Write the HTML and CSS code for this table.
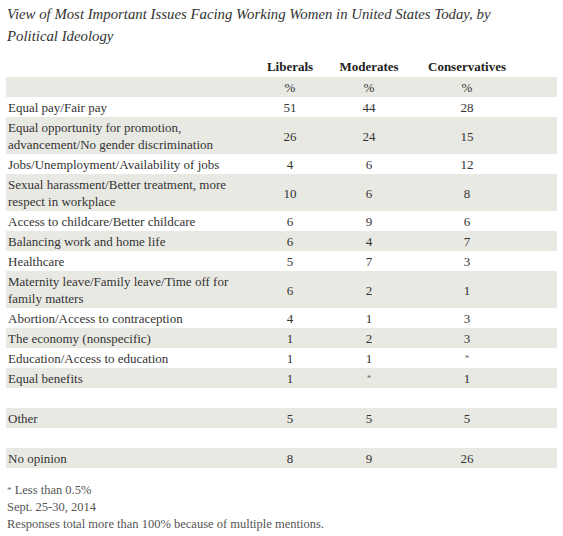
FILE: index.html
```html
<!DOCTYPE html>
<html>
  <head>
    <meta charset="UTF-8">
    <title>View of Most Important Issues Facing Working Women</title>
    <link rel="stylesheet" href="styles.css">
  </head>
  <body>
    <div class="poll">
      <h1 class="poll-title">View of Most Important Issues Facing Working Women in United States Today, by Political Ideology</h1>

      <table class="poll-table">
        <colgroup>
          <col class="col-label">
          <col class="col-lib">
          <col class="col-mod">
          <col class="col-con">
        </colgroup>
        <thead>
          <tr>
            <th></th>
            <th>Liberals</th>
            <th>Moderates</th>
            <th>Conservatives</th>
          </tr>
        </thead>
        <tbody>
          <tr><td></td><td>%</td><td>%</td><td>%</td></tr>
          <tr><td>Equal pay/Fair pay</td><td>51</td><td>44</td><td>28</td></tr>
          <tr><td>Equal opportunity for promotion, advancement/No gender discrimination</td><td>26</td><td>24</td><td>15</td></tr>
          <tr><td>Jobs/Unemployment/Availability of jobs</td><td>4</td><td>6</td><td>12</td></tr>
          <tr><td>Sexual harassment/Better treatment, more respect in workplace</td><td>10</td><td>6</td><td>8</td></tr>
          <tr><td>Access to childcare/Better childcare</td><td>6</td><td>9</td><td>6</td></tr>
          <tr><td>Balancing work and home life</td><td>6</td><td>4</td><td>7</td></tr>
          <tr><td>Healthcare</td><td>5</td><td>7</td><td>3</td></tr>
          <tr><td>Maternity leave/Family leave/Time off for family matters</td><td>6</td><td>2</td><td>1</td></tr>
          <tr><td>Abortion/Access to contraception</td><td>4</td><td>1</td><td>3</td></tr>
          <tr><td>The economy (nonspecific)</td><td>1</td><td>2</td><td>3</td></tr>
          <tr><td>Education/Access to education</td><td>1</td><td>1</td><td><span class="star">*</span></td></tr>
          <tr><td>Equal benefits</td><td>1</td><td><span class="star">*</span></td><td>1</td></tr>
          <tr class="blank"><td>&nbsp;</td><td></td><td></td><td></td></tr>
          <tr><td>Other</td><td>5</td><td>5</td><td>5</td></tr>
          <tr class="blank"><td>&nbsp;</td><td></td><td></td><td></td></tr>
          <tr><td>No opinion</td><td>8</td><td>9</td><td>26</td></tr>
        </tbody>
      </table>

      <div class="poll-notes">
        <p><span class="star">*</span> Less than 0.5%</p>
        <p>Sept. 25-30, 2014</p>
        <p>Responses total more than 100% because of multiple mentions.</p>
      </div>
    </div>
  </body>
</html>
```

FILE: styles.css
```css
body {
  margin: 0;
  background: #fff;
  color: #333;
  font-family: "Liberation Serif", "Times New Roman", serif;
}

.poll {
  padding: 3px 6px 0 6px;
}

.poll-title {
  margin: 0;
  max-width: 505px;
  padding-left: 1px;
  font-size: 14.8px;
  font-style: italic;
  font-weight: normal;
  line-height: 22px;
  color: #333;
}

.poll-table {
  margin-top: 8px;
  width: 551px;
  border-collapse: collapse;
  border-spacing: 0;
  table-layout: fixed;
  font-size: 13px;
  line-height: 17px;
}
.col-label { width: 244px; }
.col-lib { width: 80px; }
.col-mod { width: 78px; }
.col-con { width: 149px; }

.poll-table th {
  height: 22px;
  padding: 0;
  font-weight: bold;
  text-align: center;
  color: #222;
}
.poll-table th:last-child,
.poll-table td:last-child {
  padding-right: 31px;
}

.poll-table td {
  padding: 2px 0 1px 0;
  text-align: center;
  vertical-align: middle;
}
.poll-table td:first-child {
  padding: 2px 14px 1px 2px;
  text-align: left;
}
.poll-table tbody tr:nth-child(odd) {
  background-color: #e9e9e4;
}

.star {
  font-size: 9px;
  vertical-align: top;
  color: #666;
}

.poll-notes {
  margin-top: 14px;
  padding-left: 1px;
  font-size: 12.5px;
  line-height: 17px;
  color: #555;
}
.poll-notes p {
  margin: 0;
}
```
